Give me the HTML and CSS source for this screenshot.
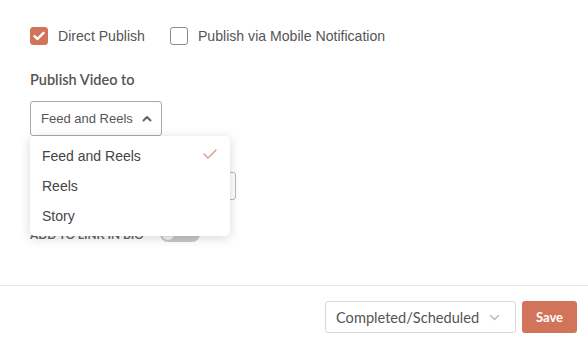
FILE: index.html
```html
<!DOCTYPE html>
<html>
<head>
<meta charset="utf-8">
<link rel="stylesheet" href="styles.css">
</head>
<body>
<div class="page">
  <div class="content">
    <div class="checks">
      <label class="check">
        <span class="box on">
          <svg width="12" height="10" viewBox="0 0 12 10"><path d="M1.5 5.2 L4.5 8 L10.5 1.8" fill="none" stroke="#fff" stroke-width="2.4" stroke-linecap="round" stroke-linejoin="round"/></svg>
        </span>
        <span class="check-text">Direct Publish</span>
      </label>
      <label class="check">
        <span class="box"></span>
        <span class="check-text">Publish via Mobile Notification</span>
      </label>
    </div>

    <div class="section-label">Publish Video to</div>

    <div class="select-wrap">
      <div class="select">
        <span>Feed and Reels</span>
        <svg class="chev" width="10" height="7" viewBox="0 0 10 7"><path d="M1.5 5.5 L5 2 L8.5 5.5" fill="none" stroke="#666" stroke-width="2" stroke-linecap="round" stroke-linejoin="round"/></svg>
      </div>
      <div class="menu">
        <div class="item">Feed and Reels
          <svg class="tick" width="14" height="10" viewBox="0 0 14 10"><path d="M1 5 L5 9 L13 1" fill="none" stroke="#d39a8c" stroke-width="1.3" stroke-linecap="round" stroke-linejoin="round"/></svg>
        </div>
        <div class="item">Reels</div>
        <div class="item">Story</div>
      </div>
    </div>

    <div class="field"></div>

    <div class="toggle-row">
      <span class="toggle-label">Add to link in bio</span>
      <span class="toggle"><span class="knob"></span></span>
    </div>
  </div>

  <div class="footer">
    <div class="status">
      <span>Completed/Scheduled</span>
      <svg width="11" height="7" viewBox="0 0 11 7"><path d="M1.5 1.5 L5.5 5.5 L9.5 1.5" fill="none" stroke="#bbb" stroke-width="1.5" stroke-linecap="round" stroke-linejoin="round"/></svg>
    </div>
    <button class="save">Save</button>
  </div>
</div>
</body>
</html>
```
FILE: styles.css
```css
* { box-sizing: border-box; }
html, body { margin: 0; padding: 0; background: #fff; }
body { width: 588px; height: 344px; overflow: hidden; font-family: "Liberation Sans", Arial, sans-serif; color: #555; }

.page { display: flex; flex-direction: column; height: 344px; }
.content { padding: 27px 30px 0; height: 286px; border-bottom: 1px solid #e6e6e6; }

.checks { display: flex; align-items: center; gap: 25px; height: 18px; }
.check { display: flex; align-items: center; gap: 10px; }
.box { width: 18px; height: 18px; border: 1px solid #8a8a8a; border-radius: 3px; background: #fff; display: flex; align-items: center; justify-content: center; }
.box.on { background: #d27459; border-color: #d27459; }
.check-text { font-size: 14.1px; color: #555; }

.section-label { margin-top: 27px; font-family: Lato, sans-serif; font-size: 14.5px; font-weight: 600; color: #555; line-height: 16px; }

.select-wrap { position: relative; margin-top: 13px; width: 132px; }
.select { height: 35px; border: 1px solid #aaa; border-radius: 3px; display: flex; align-items: center; padding: 0 0 0 10px; font-size: 13px; color: #555; }
.select .chev { margin-left: 9px; }

.menu { position: absolute; left: 0; top: 35px; width: 200px; background: #fff; border-radius: 5px; box-shadow: 0 2px 12px rgba(0,0,0,0.16); padding: 5px 0; z-index: 5; }
.item { height: 30px; display: flex; align-items: center; justify-content: space-between; padding: 0 13px 0 12px; font-size: 14px; color: #444; }
.tick { margin-top: -4px; }

.field { margin-top: 36px; width: 206px; height: 28px; border: 1px solid #bbb; border-radius: 3px; }

.toggle-row { margin-top: 26px; display: flex; align-items: center; gap: 17px; height: 16px; }
.toggle-label { font-family: Lato, sans-serif; font-size: 11.8px; font-weight: 700; text-transform: uppercase; color: #666; width: 113px; white-space: nowrap; }
.toggle { width: 40px; height: 16px; border-radius: 8px; background: #c8c8c8; position: relative; }
.knob { position: absolute; left: 2px; top: 2px; width: 12px; height: 12px; border-radius: 50%; background: #f2f2f2; }

.footer { display: flex; justify-content: flex-end; align-items: center; gap: 6px; padding: 15px 11px 0 0; }
.status { width: 191px; height: 32px; border: 1px solid #d8d8d8; border-radius: 3px; display: flex; align-items: center; justify-content: space-between; padding: 0 15px 0 10px; font-family: Lato, sans-serif; font-size: 14.6px; color: #555; }
.save { width: 55px; height: 32px; border: none; border-radius: 3px; background: #d27459; color: #fff; font-family: Lato, sans-serif; font-weight: 700; font-size: 13px; padding: 0; }
```
